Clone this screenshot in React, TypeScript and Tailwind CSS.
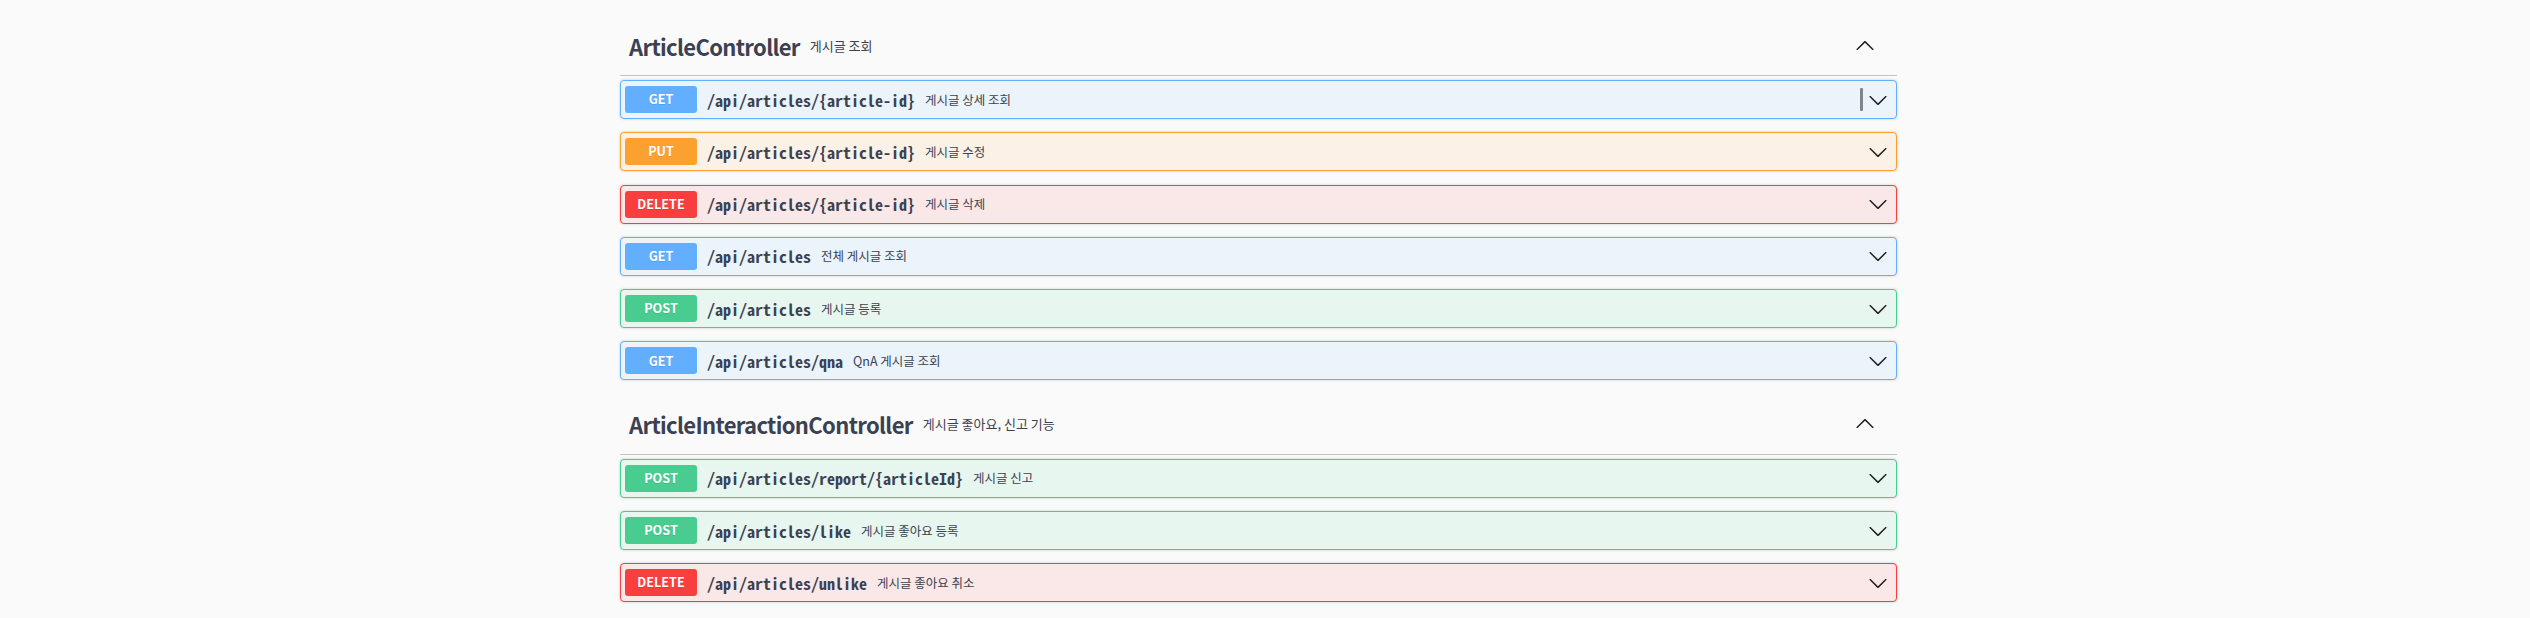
import React from 'react';

type Method = 'GET' | 'PUT' | 'POST' | 'DELETE';

const methodStyles: Record<Method, { block: string; badge: string }> = {
  GET: { block: 'border-[#61affe] bg-[#ebf3fb]', badge: 'bg-[#61affe]' },
  PUT: { block: 'border-[#fca130] bg-[#fbf1e6]', badge: 'bg-[#fca130]' },
  POST: { block: 'border-[#49cc90] bg-[#e8f6f0]', badge: 'bg-[#49cc90]' },
  DELETE: { block: 'border-[#f93e3e] bg-[#fae7e7]', badge: 'bg-[#f93e3e]' },
};

function Arrow({ up = false }: { up?: boolean }) {
  return (
    <svg width="20" height="20" viewBox="0 0 20 20" className={up ? 'rotate-180 shrink-0' : 'shrink-0'}>
      <path
        fill="#1f1f1f"
        d="M17.418 6.109c.272-.268.709-.268.979 0s.271.701 0 .969l-7.908 7.83c-.27.268-.707.268-.979 0l-7.908-7.83c-.27-.268-.27-.701 0-.969.271-.268.709-.268.979 0L10 13.25l7.418-7.141z"
      />
    </svg>
  );
}

function Operation({ op }: { op: Operation }) {
  const s = methodStyles[op.method];
  return (
    <div
      className={`mb-[13.3px] flex h-[39px] items-center rounded-[4px] border pl-[4px] pr-[8px] shadow-[0_0_3px_rgba(0,0,0,0.19)] ${s.block}`}
    >
      <div
        className={`flex h-[27px] w-[72px] shrink-0 items-center justify-center rounded-[3px] text-[12.6px] font-bold text-white [text-shadow:0_1px_0_rgba(0,0,0,0.1)] ${s.badge}`}
      >
        {op.method}
      </div>
      <span className="ml-[10px] font-['Noto_Sans_Mono_CJK_KR','Liberation_Mono',monospace] text-[16px] leading-[16px] font-semibold text-[#3b4151]">
        {op.path}
      </span>
      <span className="ml-[10px] text-[12.5px] leading-[16px] text-[#3b4151]">{op.desc}</span>
      <div className="flex-1" />
      {op.focus && <div className="mr-[5px] h-[23px] w-[3px] rounded-[1px] bg-[#7f8491]" />}
      <Arrow />
    </div>
  );
}

function Section({ tag }: { tag: Tag }) {
  return (
    <div className="pb-[4px]">
      <div className="flex h-[57px] items-center border-b border-[rgba(59,65,81,0.3)] pb-[3px] pl-[9px] pr-[22px]">
        <h3 className="text-[22px] leading-[24px] font-bold tracking-[-0.65px] text-[#3b4151]">{tag.name}</h3>
        <small className="ml-[10px] text-[13px] leading-[16px] text-[#3b4151]">{tag.desc}</small>
        <div className="flex-1" />
        <Arrow up />
      </div>
      <div className="mt-[4px]">
        {tag.ops.map((op, i) => (
          <Operation key={i} op={op} />
        ))}
      </div>
    </div>
  );
}

export default function App() {
  return (
    <div className="min-h-[618px] bg-[#fafafa] pt-[19px] font-['Noto_Sans_CJK_KR','Noto_Sans',sans-serif]">
      <div className="ml-[620px] w-[1277px]">
        {tags.map((tag) => (
          <Section key={tag.name} tag={tag} />
        ))}
      </div>
    </div>
  );
}

type Operation = { method: Method; path: string; desc: string; focus?: boolean };
type Tag = { name: string; desc: string; ops: Operation[] };

const tags: Tag[] = [
  {
    name: 'ArticleController',
    desc: '게시글 조회',
    ops: [
      { method: 'GET', path: '/api/articles/{article-id}', desc: '게시글 상세 조회', focus: true },
      { method: 'PUT', path: '/api/articles/{article-id}', desc: '게시글 수정' },
      { method: 'DELETE', path: '/api/articles/{article-id}', desc: '게시글 삭제' },
      { method: 'GET', path: '/api/articles', desc: '전체 게시글 조회' },
      { method: 'POST', path: '/api/articles', desc: '게시글 등록' },
      { method: 'GET', path: '/api/articles/qna', desc: 'QnA 게시글 조회' },
    ],
  },
  {
    name: 'ArticleInteractionController',
    desc: '게시글 좋아요, 신고 기능',
    ops: [
      { method: 'POST', path: '/api/articles/report/{articleId}', desc: '게시글 신고' },
      { method: 'POST', path: '/api/articles/like', desc: '게시글 좋아요 등록' },
      { method: 'DELETE', path: '/api/articles/unlike', desc: '게시글 좋아요 취소' },
    ],
  },
];
